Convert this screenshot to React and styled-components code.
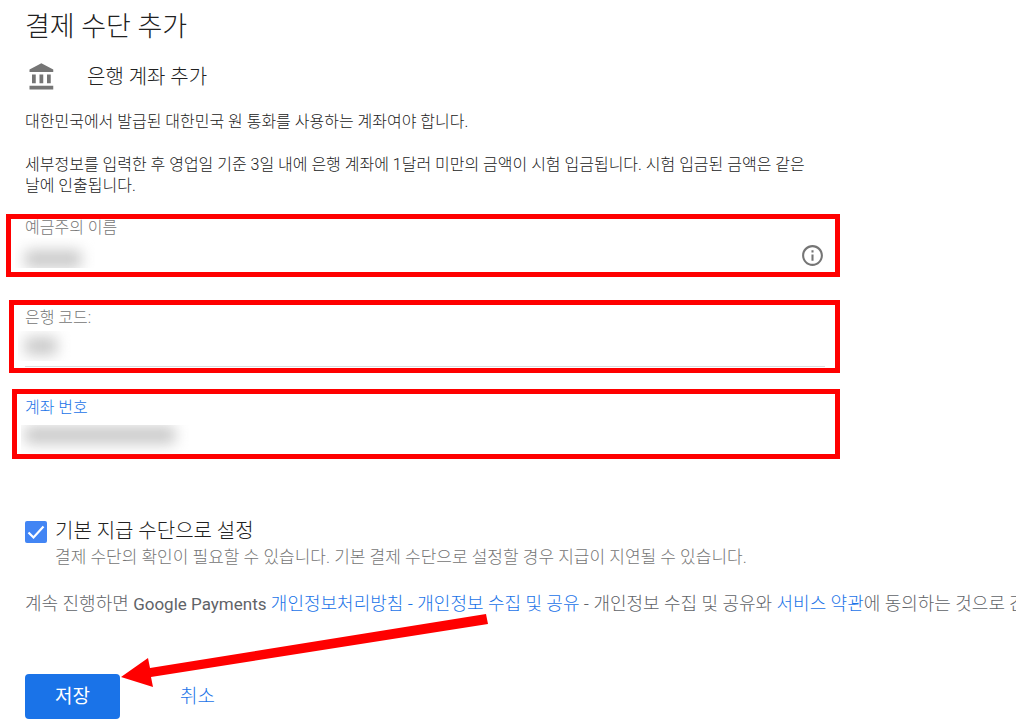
import React, { useState } from 'react';
import styled, { createGlobalStyle } from 'styled-components';
import { MdInfoOutline } from 'react-icons/md';

const GlobalStyle = createGlobalStyle`
  * {
    box-sizing: border-box;
  }

  body {
    margin: 0;
    background: #fff;
    color: #212121;
    font-family: Roboto, 'Noto Sans CJK KR', sans-serif;
    font-size: 16px;
    overflow-x: hidden;
  }

  a {
    color: #1a73e8;
    text-decoration: none;
  }
`;

const Page = styled.main`
  padding: 9px 0 4px;
  overflow: hidden;
`;

const Column = styled.div`
  max-width: 840px;
`;

const Title = styled.h1`
  margin: 0 25px;
  font-size: 27px;
  font-weight: 300;
  line-height: 36px;
`;

const MethodHeader = styled.div`
  display: flex;
  align-items: center;
  gap: 30px;
  margin: 16px 27px 0;
`;

const BankIcon = styled.svg`
  width: 30px;
  height: 30px;
  fill: #757575;
`;

const MethodName = styled.h2`
  margin: 0;
  font-size: 20px;
  font-weight: 300;
  line-height: 32px;
`;

const Intro = styled.div`
  margin: 18px 25px 14px;
  font-weight: 300;
  line-height: 21px;

  p {
    margin: 0 0 22px;
  }

  p:last-child {
    margin-bottom: 0;
  }
`;

const Fields = styled.div`
  display: flex;
  flex-direction: column;
  margin-top: 18px;
`;

const Field = styled.div`
  position: relative;
  height: ${props => props.$height}px;
  margin-left: ${props => props.$inset}px;
  margin-bottom: ${props => props.$gap}px;
  padding: ${props => props.$top}px 10px 0 ${props => 20 - props.$inset}px;
  border: 5px solid #f00;
`;

const FieldLabel = styled.label`
  display: block;
  color: ${props => (props.$active ? '#1a73e8' : '#757575')};
  font-weight: 300;
  line-height: 18px;
`;

const InputRow = styled.div`
  display: flex;
  align-items: center;
  height: ${props => (props.$underline ? 40 : 36)}px;
  border-bottom: ${props => (props.$underline ? '1px solid #dadce0' : 'none')};
`;

const Input = styled.input`
  flex: 1;
  min-width: 0;
  height: 28px;
  padding: 0;
  border: 0;
  outline: 0;
  background: transparent;
  font: inherit;
`;

const InfoButton = styled.button`
  display: flex;
  padding: 0;
  border: 0;
  background: none;
  color: #757575;

  svg {
    width: 25px;
    height: 25px;
  }
`;

const Mask = styled.span`
  position: absolute;
  left: 4px;
  top: ${props => props.$top}px;
  width: ${props => props.$width + 32}px;
  height: 30px;
  overflow: hidden;
  pointer-events: none;

  &::before {
    content: '';
    position: absolute;
    left: ${props => 16 - props.$inset}px;
    top: ${props => props.$offset}px;
    width: ${props => props.$width}px;
    height: 18px;
    background: #cacaca;
    filter: blur(7px);
  }
`;

const DefaultOption = styled.div`
  display: grid;
  grid-template-columns: 22px 1fr;
  column-gap: 8px;
  margin: 0 25px;
`;

const Checkbox = styled.input`
  appearance: none;
  width: 22px;
  height: 22px;
  margin: 4px 0 0;
  border: 2px solid #757575;
  border-radius: 2px;

  &:checked {
    border: 0;
    background: #4285f4
      url("data:image/svg+xml,%3Csvg xmlns='http://www.w3.org/2000/svg' viewBox='0 0 22 22'%3E%3Cpath d='M3.5 11.5l5 5L18.5 5.5' fill='none' stroke='white' stroke-width='2.2'/%3E%3C/svg%3E");
  }
`;

const OptionLabel = styled.label`
  font-size: 20px;
  font-weight: 300;
  line-height: 28px;
`;

const OptionHint = styled.p`
  grid-column: 2;
  margin: 0;
  color: #757575;
  font-size: 17px;
  font-weight: 300;
  line-height: 24px;
  white-space: nowrap;
`;

const Legal = styled.p`
  margin: 22px 0 0 25px;
  color: #5f6368;
  font-size: 18px;
  font-weight: 300;
  line-height: 26px;
  white-space: nowrap;
`;

const Brand = styled.span`
  font-size: 17px;
  font-weight: 400;
`;

const Actions = styled.div`
  position: relative;
  display: flex;
  gap: 30px;
  margin: 57px 25px 0;
`;

const Button = styled.button`
  height: 45px;
  min-width: 95px;
  padding: 0 28px 4px;
  border: 0;
  border-radius: 4px;
  background: ${props => (props.$primary ? '#1a73e8' : 'transparent')};
  color: ${props => (props.$primary ? '#fff' : '#1a73e8')};
  font-family: inherit;
  font-size: 19px;
  font-weight: ${props => (props.$primary ? 400 : 300)};
`;

const Arrow = styled.svg`
  position: absolute;
  left: 95px;
  top: -62px;
  width: 372px;
  height: 80px;
  pointer-events: none;
`;

const fields = [
  { id: 'holder', label: '예금주의 이름', height: 63, inset: 6, gap: 23, top: 0, mask: 56, maskTop: 19, offset: 12, info: true },
  { id: 'bank-code', label: '은행 코드:', height: 73, inset: 9, gap: 16, top: 4, mask: 32, maskTop: 26, offset: 6, underline: true },
  { id: 'account', label: '계좌 번호', height: 70, inset: 12, gap: 58, top: 5, mask: 150, maskTop: 31, offset: 1, active: true },
];

const App = () => {
  const [isDefault, setIsDefault] = useState(true);

  return (
    <>
      <GlobalStyle />
      <Page>
        <Column>
          <Title>결제 수단 추가</Title>
          <MethodHeader>
            <BankIcon viewBox="0 0 24 24" aria-hidden="true">
              <path d="M4 10v7h3v-7H4zm6 0v7h3v-7h-3zM2 22h19v-3H2v3zm14-12v7h3v-7h-3zM11.500 1L2 6v2h19V6l-9.500-5z" />
            </BankIcon>
            <MethodName>은행 계좌 추가</MethodName>
          </MethodHeader>

          <Intro>
            <p>대한민국에서 발급된 대한민국 원 통화를 사용하는 계좌여야 합니다.</p>
            <p>
              세부정보를 입력한 후 영업일 기준 3일 내에 은행 계좌에 1달러 미만의 금액이 시험 입금됩니다. 시험 입금된 금액은 같은 날에 인출됩니다.
            </p>
          </Intro>

          <Fields>
            {fields.map(field => (
              <Field key={field.id} $height={field.height} $inset={field.inset} $gap={field.gap} $top={field.top}>
                <FieldLabel htmlFor={field.id} $active={field.active}>{field.label}</FieldLabel>
                <InputRow $underline={field.underline}>
                  <Input id={field.id} type="text" />
                  {field.info && (
                    <InfoButton type="button" aria-label="도움말">
                      <MdInfoOutline />
                    </InfoButton>
                  )}
                </InputRow>
                <Mask $top={field.maskTop} $width={field.mask} $inset={field.inset} $offset={field.offset} />
              </Field>
            ))}
          </Fields>

          <DefaultOption>
            <Checkbox
              id="default-method"
              type="checkbox"
              checked={isDefault}
              onChange={e => setIsDefault(e.target.checked)}
            />
            <OptionLabel htmlFor="default-method">기본 지급 수단으로 설정</OptionLabel>
            <OptionHint>결제 수단의 확인이 필요할 수 있습니다. 기본 결제 수단으로 설정할 경우 지급이 지연될 수 있습니다.</OptionHint>
          </DefaultOption>
        </Column>

        <Legal>
          계속 진행하면 <Brand>Google Payments</Brand> <a href="#privacy">개인정보처리방침 - 개인정보 수집 및 공유</a> - 개인정보 수집 및 공유와 <a href="#terms">서비스 약관</a>에 동의하는 것으로 간주됩니다.
        </Legal>

        <Actions>
          <Button type="submit" $primary>저장</Button>
          <Button type="button">취소</Button>
          <Arrow viewBox="0 0 372 80" aria-hidden="true">
            <path d="M1 65L28 46L30 56L366 2L368 12L31 65L33 75Z" fill="#f00" />
          </Arrow>
        </Actions>
      </Page>
    </>
  );
};

export default App;
